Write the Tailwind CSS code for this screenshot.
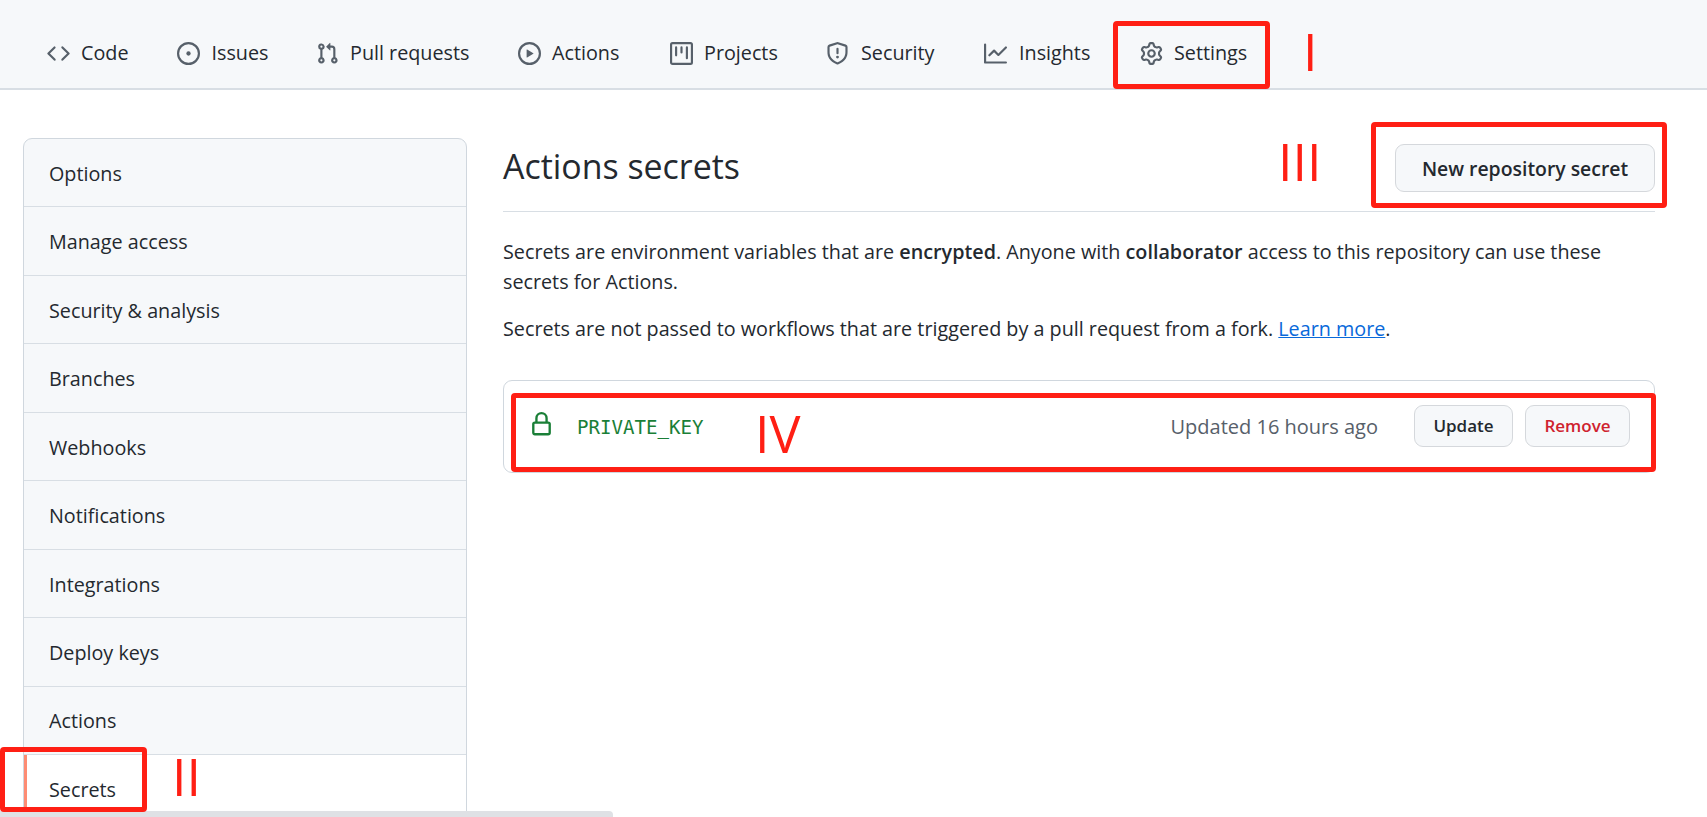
<!DOCTYPE html>
<html lang="en">
<head>
<meta charset="utf-8">
<title>Actions secrets</title>
<script src="https://cdn.jsdelivr.net/npm/@tailwindcss/browser@4"></script>
</head>
<body class="bg-white">
<div class="relative h-[817px] w-[1707px] overflow-hidden font-['Open_Sans',sans-serif] text-[19.75px] text-[#24292f]">

  <!-- Tabs -->
  <header class="flex h-[90px] items-start border-b-2 border-[#d8dee4] bg-[#f6f8fa] pl-[47px] pt-[41px]">
    <a class="flex h-6 w-[129.5px] items-center gap-[11px]"><svg class="size-[23px] fill-[#57606a]" viewBox="0 0 16 16"><path d="M4.72 3.22a.75.75 0 011.06 1.06L2.06 8l3.72 3.72a.75.75 0 11-1.06 1.06L.47 8.53a.75.75 0 010-1.06l4.25-4.25zm6.56 0a.75.75 0 10-1.06 1.06L13.94 8l-3.72 3.72a.75.75 0 101.06 1.06l4.25-4.25a.75.75 0 000-1.06l-4.25-4.25z"/></svg>Code</a>
    <a class="flex h-6 w-[139.5px] items-center gap-[12px]"><svg class="size-[23px] fill-[#57606a]" viewBox="0 0 16 16"><path d="M8 9.5a1.5 1.5 0 100-3 1.5 1.5 0 000 3z"/><path fill-rule="evenodd" d="M8 0a8 8 0 100 16A8 8 0 008 0zM1.5 8a6.5 6.5 0 1113 0 6.5 6.5 0 01-13 0z"/></svg>Issues</a>
    <a class="flex h-6 w-[202px] items-center gap-[11px]"><svg class="size-[23px] fill-[#57606a]" viewBox="0 0 16 16"><path fill-rule="evenodd" d="M7.177 3.073L9.573.677A.25.25 0 0110 .854v4.792a.25.25 0 01-.427.177L7.177 3.427a.25.25 0 010-.354zM3.75 2.5a.75.75 0 100 1.5.75.75 0 000-1.5zm-2.25.75a2.25 2.25 0 113 2.122v5.256a2.251 2.251 0 11-1.5 0V5.372A2.25 2.25 0 011.5 3.25zM11 2.5h-1V4h1a1 1 0 011 1v5.628a2.251 2.251 0 101.5 0V5A2.5 2.5 0 0011 2.5zm1 10.25a.75.75 0 111.5 0 .75.75 0 01-1.5 0zM3.75 12a.75.75 0 100 1.5.75.75 0 000-1.5z"/></svg>Pull requests</a>
    <a class="flex h-6 w-[152px] items-center gap-[11px]"><svg class="size-[23px] fill-[#57606a]" viewBox="0 0 16 16"><path fill-rule="evenodd" d="M1.5 8a6.5 6.5 0 1113 0 6.5 6.5 0 01-13 0zM8 0a8 8 0 100 16A8 8 0 008 0zM6.379 5.227A.25.25 0 006 5.442v5.117a.25.25 0 00.379.214l4.264-2.559a.25.25 0 000-.428L6.379 5.227z"/></svg>Actions</a>
    <a class="flex h-6 w-[156px] items-center gap-[11px]"><svg class="size-[23px] fill-[#57606a]" viewBox="0 0 16 16"><path fill-rule="evenodd" d="M1.75 0A1.75 1.75 0 000 1.75v12.5C0 15.216.784 16 1.75 16h12.5A1.75 1.75 0 0016 14.25V1.75A1.75 1.75 0 0014.25 0H1.75zM1.5 1.75a.25.25 0 01.25-.25h12.5a.25.25 0 01.25.25v12.5a.25.25 0 01-.25.25H1.75a.25.25 0 01-.25-.25V1.75zM11.75 3a.75.75 0 00-.75.75v7.5a.75.75 0 001.5 0v-7.5a.75.75 0 00-.75-.75zm-8.25.75a.75.75 0 011.5 0v5.5a.75.75 0 01-1.5 0v-5.5zM8 3a.75.75 0 00-.75.75v3.5a.75.75 0 001.5 0v-3.5A.75.75 0 008 3z"/></svg>Projects</a>
    <a class="flex h-6 w-[158px] items-center gap-[12px]"><svg class="size-[23px] fill-[#57606a]" viewBox="0 0 16 16"><path fill-rule="evenodd" d="M7.467.133a1.75 1.75 0 011.066 0l5.25 1.68A1.75 1.75 0 0115 3.48V7c0 1.566-.32 3.182-1.303 4.682-.983 1.498-2.585 2.813-5.032 3.855a1.7 1.7 0 01-1.33 0c-2.447-1.042-4.049-2.357-5.032-3.855C1.32 10.182 1 8.566 1 7V3.48a1.75 1.75 0 011.217-1.667l5.25-1.68zm.61 1.429a.25.25 0 00-.153 0l-5.25 1.68a.25.25 0 00-.174.238V7c0 1.358.275 2.666 1.057 3.86.784 1.194 2.121 2.34 4.366 3.297a.2.2 0 00.154 0c2.245-.956 3.582-2.104 4.366-3.298C13.225 9.666 13.5 8.36 13.5 7V3.48a.25.25 0 00-.174-.237l-5.25-1.68zM9 10.5a1 1 0 11-2 0 1 1 0 012 0zm-.25-5.75a.75.75 0 10-1.5 0v3a.75.75 0 001.5 0v-3z"/></svg>Security</a>
    <a class="flex h-6 w-[156px] items-center gap-[12px]"><svg class="size-[23px] fill-[#57606a]" viewBox="0 0 16 16"><path fill-rule="evenodd" d="M1.5 1.75a.75.75 0 00-1.5 0v12.5c0 .414.336.75.75.75h14.5a.75.75 0 000-1.5H1.5V1.75zm14.28 2.53a.75.75 0 00-1.06-1.06L10 7.94 7.53 5.47a.75.75 0 00-1.06 0L3.22 8.72a.75.75 0 001.06 1.06L7 7.06l2.47 2.47a.75.75 0 001.06 0l5.25-5.25z"/></svg>Insights</a>
    <a class="flex h-6 items-center gap-[11px]"><svg class="size-[23px] fill-[#57606a]" viewBox="0 0 16 16"><path fill-rule="evenodd" d="M7.429 1.525a6.593 6.593 0 011.142 0c.036.003.108.036.137.146l.289 1.105c.147.56.55.967.997 1.189.174.086.341.183.501.29.417.278.97.423 1.53.27l1.102-.303c.11-.03.175.016.195.046.219.31.41.641.573.989.014.031.022.11-.059.19l-.815.806c-.411.406-.562.957-.53 1.456a4.588 4.588 0 010 .582c-.032.499.119 1.05.53 1.456l.815.806c.08.08.073.159.059.19a6.494 6.494 0 01-.573.99c-.02.029-.086.074-.195.045l-1.103-.303c-.559-.153-1.112-.008-1.529.27-.16.107-.327.204-.5.29-.449.222-.851.628-.998 1.189l-.289 1.105c-.029.11-.101.143-.137.146a6.613 6.613 0 01-1.142 0c-.036-.003-.108-.037-.137-.146l-.289-1.105c-.147-.56-.55-.967-.997-1.189a4.502 4.502 0 01-.501-.29c-.417-.278-.97-.423-1.53-.27l-1.102.303c-.11.03-.175-.016-.195-.046a6.492 6.492 0 01-.573-.989c-.014-.031-.022-.11.059-.19l.815-.806c.411-.406.562-.957.53-1.456a4.587 4.587 0 010-.582c.032-.499-.119-1.05-.53-1.456l-.815-.806c-.08-.08-.073-.159-.059-.19a6.44 6.44 0 01.573-.99c.02-.029.086-.075.195-.045l1.103.303c.559.153 1.112.008 1.529-.27.16-.107.327-.204.5-.29.449-.222.851-.628.998-1.189l.289-1.105c.029-.11.101-.143.137-.146zM8 0c-.236 0-.47.01-.701.03-.743.065-1.29.615-1.458 1.261l-.29 1.106c-.017.066-.078.158-.211.224a5.994 5.994 0 00-.668.386c-.123.082-.233.09-.3.071L3.27 2.776c-.644-.177-1.392.02-1.82.63a7.977 7.977 0 00-.704 1.217c-.315.675-.111 1.422.363 1.891l.815.806c.05.048.098.147.088.294a6.084 6.084 0 000 .772c.01.147-.038.246-.088.294l-.815.806c-.474.469-.678 1.216-.363 1.891.2.428.436.835.704 1.218.428.609 1.176.806 1.82.63l1.103-.303c.066-.019.176-.011.299.071.213.143.436.272.668.386.133.066.194.158.212.224l.289 1.106c.169.646.715 1.196 1.458 1.26a8.094 8.094 0 001.402 0c.743-.064 1.29-.614 1.458-1.26l.29-1.106c.017-.066.078-.158.211-.224a5.98 5.98 0 00.668-.386c.123-.082.233-.09.3-.071l1.102.302c.644.177 1.392-.02 1.82-.63.268-.382.505-.789.704-1.217.315-.675.111-1.422-.364-1.891l-.814-.806c-.05-.048-.098-.147-.088-.294a6.1 6.1 0 000-.772c-.01-.147.039-.246.088-.294l.814-.806c.475-.469.679-1.216.364-1.891a7.992 7.992 0 00-.704-1.218c-.428-.609-1.176-.806-1.82-.63l-1.103.303c-.066.019-.176.011-.299-.071a5.991 5.991 0 00-.668-.386c-.133-.066-.194-.158-.212-.224L10.16 1.29C9.99.645 9.444.095 8.701.031A8.094 8.094 0 008 0zm1.5 8a1.5 1.5 0 11-3 0 1.5 1.5 0 013 0zM11 8a3 3 0 11-6 0 3 3 0 016 0z"/></svg>Settings</a>
  </header>

  <div class="flex pl-[23px] pt-[48px]">
    <!-- Sidebar -->
    <nav class="w-[444px] shrink-0 rounded-t-[9px] border border-[#d0d7de] bg-[#f6f8fa]">
      <a class="flex h-[68.45px] items-center border-b border-[#d8dee4] pl-[25px] pt-[2px]">Options</a>
      <a class="flex h-[68.45px] items-center border-b border-[#d8dee4] pl-[25px] pt-[2px]">Manage access</a>
      <a class="flex h-[68.45px] items-center border-b border-[#d8dee4] pl-[25px] pt-[2px]">Security &amp; analysis</a>
      <a class="flex h-[68.45px] items-center border-b border-[#d8dee4] pl-[25px] pt-[2px]">Branches</a>
      <a class="flex h-[68.45px] items-center border-b border-[#d8dee4] pl-[25px] pt-[2px]">Webhooks</a>
      <a class="flex h-[68.45px] items-center border-b border-[#d8dee4] pl-[25px] pt-[2px]">Notifications</a>
      <a class="flex h-[68.45px] items-center border-b border-[#d8dee4] pl-[25px] pt-[2px]">Integrations</a>
      <a class="flex h-[68.45px] items-center border-b border-[#d8dee4] pl-[25px] pt-[2px]">Deploy keys</a>
      <a class="flex h-[68.45px] items-center border-b border-[#d8dee4] pl-[25px] pt-[2px]">Actions</a>
      <a class="flex h-[68.45px] items-center border-l-[3px] border-[#fd8c73] bg-white pl-[22px] pt-[2px]">Secrets</a>
    </nav>

    <!-- Main -->
    <main class="ml-[36px] w-[1152px]">
      <div class="flex h-[74px] items-start justify-between border-b border-[#d8dee4] pt-[6px]">
        <h2 class="-mt-[1px] text-[33.9px] leading-[46px] font-normal">Actions secrets</h2>
        <button class="h-[48px] w-[260px] rounded-[9px] border border-[#d5d8dc] bg-[#f6f8fa] pt-[2px] text-[19.4px] font-semibold">New repository secret</button>
      </div>
      <p class="mt-[25px] leading-[30px] whitespace-nowrap">Secrets are environment variables that are <b class="font-semibold">encrypted</b>. Anyone with <b class="font-semibold">collaborator</b> access to this repository can use these<br>secrets for Actions.</p>
      <p class="mt-[17px] leading-[30px] whitespace-nowrap">Secrets are not passed to workflows that are triggered by a pull request from a fork. <a class="text-[#0969da] underline">Learn more</a>.</p>

      <div class="mt-[36px] flex h-[93px] items-center rounded-[9px] border border-[#d0d7de] pl-[25px] pr-[24px]">
        <svg class="-mt-[4px] size-[25px] fill-[#1a7f37]" viewBox="0 0 16 16"><path fill-rule="evenodd" d="M4 4v2h-.25A1.75 1.75 0 002 7.75v5.5c0 .966.784 1.75 1.75 1.75h8.5A1.75 1.75 0 0014 13.25v-5.5A1.75 1.75 0 0012.25 6H12V4a4 4 0 10-8 0zm6.5 2V4a2.5 2.5 0 00-5 0v2h5zM12 7.5h.25a.25.25 0 01.25.25v5.5a.25.25 0 01-.25.25h-8.5a.25.25 0 01-.25-.25v-5.5a.25.25 0 01.25-.25H12z"/></svg>
        <code class="ml-[23px] mt-[3px] font-['DejaVu_Sans_Mono',monospace] text-[19.1px] text-[#1a7f37]">PRIVATE_KEY</code>
        <span class="ml-auto text-[20px] text-[#57606a]">Updated 16 hours ago</span>
        <button class="ml-[36px] -mt-[2px] h-[42px] w-[99px] rounded-[9px] border border-[#d5d8dc] bg-[#f6f8fa] text-[17px] font-semibold">Update</button>
        <button class="ml-[12px] -mt-[2px] h-[42px] w-[105px] rounded-[9px] border border-[#d5d8dc] bg-[#f6f8fa] text-[17px] font-semibold text-[#cf222e]">Remove</button>
      </div>
    </main>
  </div>

  <!-- Scrollbar -->
  <div class="absolute bottom-0 left-0 h-[6px] w-[613px] rounded-tr-[4px] bg-[#dfe1e5]"></div>

  <!-- Red annotations drawn over the screenshot -->
  <div class="absolute left-[1113px] top-[21px] h-[68px] w-[157px] rounded-[4px] border-[5px] border-[#ff1f14]"></div>
  <div class="absolute left-[1371px] top-[122px] h-[86px] w-[296px] rounded-[4px] border-[5px] border-[#ff1f14]"></div>
  <div class="absolute left-[511px] top-[393px] h-[79px] w-[1145px] rounded-[4px] border-[5px] border-[#ff1f14]"></div>
  <div class="absolute left-0 top-[747px] h-[65px] w-[147px] rounded-[4px] border-[5px] border-[#ff1f14]"></div>
  <span class="absolute left-[1303px] top-[16px] text-[52px] leading-[70px] font-normal text-[#ff1f14]">I</span>
  <span class="absolute left-[1278px] top-[126px] text-[52px] leading-[70px] font-normal text-[#ff1f14]">III</span>
  <span class="absolute left-[172px] top-[741px] text-[52px] leading-[70px] font-normal text-[#ff1f14]">II</span>
  <span class="absolute left-[755px] top-[398px] text-[52px] leading-[70px] font-normal text-[#ff1f14]">IV</span>
</div>
</body>
</html>
